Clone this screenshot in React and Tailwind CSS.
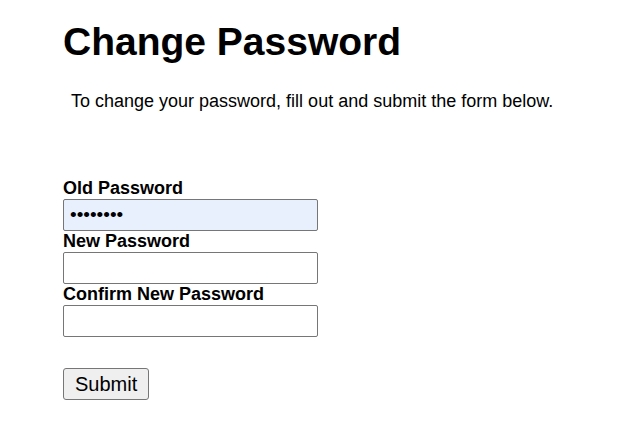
export default function App() {
  return (
    <div className="min-h-screen bg-white font-['Liberation_Sans',Arial,sans-serif] text-black">
      <div className="ml-[63px] flex flex-col pt-[19px]">
        <h1 className="text-[39px] font-bold leading-[45px]">Change Password</h1>
        <p className="ml-2 mt-[27px] text-[18px] leading-[21px]">
          To change your password, fill out and submit the form below.
        </p>
        <form className="mt-[66px] flex flex-col items-start" onSubmit={(e) => e.preventDefault()}>
          <label className="text-[18px] font-bold leading-[21px]">Old Password</label>
          <input
            type="password"
            defaultValue="password"
            className="h-8 w-[255px] rounded-[2px] border border-[#767676] bg-[#e8f0fe] px-[6px] text-[19px] outline-none"
          />
          <label className="text-[18px] font-bold leading-[21px]">New Password</label>
          <input
            type="password"
            className="h-8 w-[255px] rounded-[2px] border border-[#767676] bg-white px-[6px] text-[19px] outline-none"
          />
          <label className="text-[18px] font-bold leading-[21px]">Confirm New Password</label>
          <input
            type="password"
            className="h-8 w-[255px] rounded-[2px] border border-[#767676] bg-white px-[6px] text-[19px] outline-none"
          />
          <button
            type="submit"
            className="mt-[31px] h-8 rounded-[3px] border border-[#767676] bg-[#efefef] px-[11px] text-[20px] leading-none"
          >
            Submit
          </button>
        </form>
      </div>
    </div>
  )
}
